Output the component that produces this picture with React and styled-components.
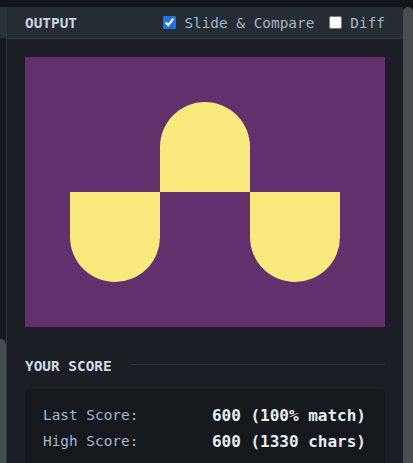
import React from "react";
import styled, { createGlobalStyle } from "styled-components";

const Global = createGlobalStyle`
  html, body { margin: 0; padding: 0; background: #111418; }
  body { font-family: "DejaVu Sans Mono", "Liberation Mono", monospace; }
  * { box-sizing: border-box; }
`;

const Page = styled.div`
  width: 413px;
  height: 463px;
  overflow: hidden;
  display: flex;
  flex-direction: column;
  background: #111418;
`;

const TopStrip = styled.div`
  height: 7px;
  flex: none;
  background: #111418;
`;

const Body = styled.div`
  flex: 1;
  display: flex;
  min-height: 0;
`;

const LeftEdge = styled.div`
  width: 6px;
  flex: none;
  display: flex;
  flex-direction: column;
  background: #16191d;
  border-right: 1px solid #2c333a;
  box-sizing: content-box;
`;

const LeftEdgeTop = styled.div`
  height: 31px;
  background: #2a3139;
`;

const LeftEdgeFill = styled.div`
  flex: 1;
  display: flex;
  flex-direction: column;
  justify-content: flex-end;
`;

const LeftThumb = styled.div`
  height: 124px;
  background: #464b4e;
  border-top-right-radius: 5px;
`;

const Panel = styled.div`
  flex: 1;
  min-width: 0;
  display: flex;
  flex-direction: column;
  background: #1b1f25;
`;

const Header = styled.div`
  height: 32px;
  flex: none;
  display: flex;
  align-items: center;
  padding: 0 18px;
  background: #252c33;
  border-bottom: 1px solid #343b43;
`;

const Title = styled.div`
  font-size: 14.4px;
  font-weight: bold;
  color: #c9d6e5;
  letter-spacing: 0;
  flex: 1;
`;

const Toggle = styled.label`
  display: flex;
  align-items: center;
  gap: 8px;
  font-size: 14.4px;
  color: #a4b6cb;
  margin-left: ${(p) => p.$gap || 0}px;
`;

const Check = styled.input`
  width: 13px;
  height: 13px;
  margin: 0;
  accent-color: #1a73e8;
`;

const Content = styled.div`
  padding: 18px 18px 0 18px;
  display: flex;
  flex-direction: column;
`;

const Canvas = styled.div`
  width: 360px;
  height: 270px;
  background: #62306d;
  position: relative;
  overflow: hidden;
`;

const Shape = styled.div`
  position: absolute;
  width: 90px;
  height: 90px;
  background: #f9e87c;
  left: ${(p) => p.$x}px;
  top: ${(p) => p.$y}px;
  border-radius: ${(p) => (p.$up ? "45px 45px 0 0" : "0 0 45px 45px")};
`;

const SectionHead = styled.div`
  margin-top: 29px;
  display: flex;
  align-items: center;
  gap: 18px;
  height: 20px;
`;

const SectionTitle = styled.div`
  font-size: 14.4px;
  font-weight: bold;
  color: #d2dce8;
  white-space: nowrap;
`;

const Rule = styled.div`
  flex: 1;
  height: 1px;
  background: #2d333a;
  margin-top: -3px;
`;

const ScoreBox = styled.div`
  margin-top: 13px;
  background: #15191e;
  border-radius: 5px;
  padding: 13px 19px 20px 18px;
  display: flex;
  flex-direction: column;
`;

const ScoreRow = styled.div`
  display: flex;
  justify-content: space-between;
  align-items: center;
  height: 26px;
`;

const Label = styled.span`
  font-size: 14.4px;
  color: #a9bacd;
`;

const Value = styled.span`
  font-size: 16px;
  font-weight: bold;
  color: #e6edf5;
`;

const Scrollbar = styled.div`
  width: 10px;
  flex: none;
  background: #484d50;
  border-top-left-radius: 5px;
  border-top-right-radius: 5px;
`;

export default function App() {
  return (
    <>
      <Global />
      <Page>
        <TopStrip />
        <Body>
          <LeftEdge>
            <LeftEdgeTop />
            <LeftEdgeFill>
              <LeftThumb />
            </LeftEdgeFill>
          </LeftEdge>
          <Panel>
            <Header>
              <Title>OUTPUT</Title>
              <Toggle>
                <Check type="checkbox" defaultChecked />
                Slide &amp; Compare
              </Toggle>
              <Toggle $gap={15}>
                <Check type="checkbox" />
                Diff
              </Toggle>
            </Header>
            <Content>
              <Canvas>
                <Shape $x={45} $y={135} />
                <Shape $x={135} $y={45} $up />
                <Shape $x={225} $y={135} />
              </Canvas>
              <SectionHead>
                <SectionTitle>YOUR SCORE</SectionTitle>
                <Rule />
              </SectionHead>
              <ScoreBox>
                <ScoreRow>
                  <Label>Last Score:</Label>
                  <Value>600 (100% match)</Value>
                </ScoreRow>
                <ScoreRow>
                  <Label>High Score:</Label>
                  <Value>600 (1330 chars)</Value>
                </ScoreRow>
              </ScoreBox>
            </Content>
          </Panel>
          <Scrollbar />
        </Body>
      </Page>
    </>
  );
}
